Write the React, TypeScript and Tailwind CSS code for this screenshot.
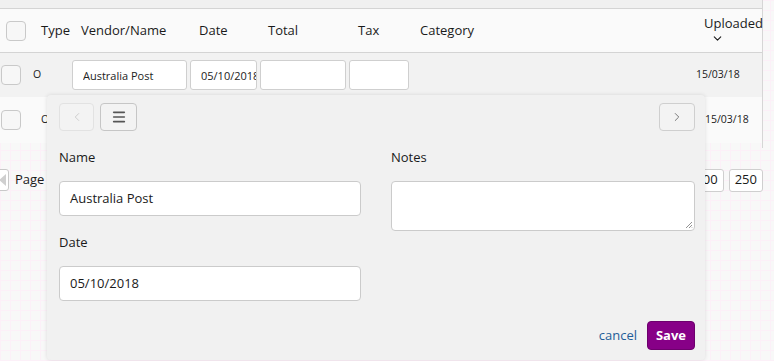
import { ChevronDown, ChevronLeft, ChevronRight, Menu } from "lucide-react";

const font = { fontFamily: '"Open Sans", "Liberation Sans", sans-serif' };

function Box({ className = "" }: { className?: string }) {
  return (
    <div
      className={`w-[20px] h-[20px] rounded-[4px] border border-[#c9c9c9] bg-[#f7f7f7] shrink-0 ${className}`}
    />
  );
}

function CellInput({ value = "", w }: { value?: string; w: string }) {
  return (
    <input
      readOnly
      value={value}
      className={`${w} h-[30px] shrink-0 mr-[3px] bg-white border border-[#cfcfcf] rounded-[3px] pl-[10px] pr-0 text-[11px] text-[#222] outline-none`}
    />
  );
}

export default function App() {
  return (
    <div
      style={font}
      className="relative w-[774px] h-[361px] overflow-hidden bg-[#f8f8f8] bg-[image:linear-gradient(to_right,#fcf0f8_1px,transparent_1px),linear-gradient(to_bottom,#fcf0f8_1px,transparent_1px)] bg-size-[10px_10px] text-[#1a1a1a]"
    >
      {/* table */}
      <div className="w-[763px] h-[148px] border-r border-[#d6d6d6] flex flex-col">
        <div className="h-[9px] bg-[#f0f0f0] border-b border-[#d4d4d4]" />
        <div className="h-[44px] bg-[#fafafa] border-b border-[#d4d4d4] flex items-center text-[13px]">
          <Box className="ml-[6px]" />
          <div className="w-[40px] ml-[15px]">Type</div>
          <div className="w-[118px]">Vendor/Name</div>
          <div className="w-[69px]">Date</div>
          <div className="w-[90px]">Total</div>
          <div className="w-[62px]">Tax</div>
          <div className="flex-1">Category</div>
          <div className="w-[58px] flex flex-col items-start leading-[16px] pb-[2px]">
            <span>Uploaded</span>
            <ChevronDown className="ml-[7px] mt-[1px]" size={13} strokeWidth={2} />
          </div>
        </div>
        <div className="h-[44px] bg-[#f2f2f2] flex items-center text-[10.5px]">
          <Box className="ml-[1px]" />
          <div className="w-[51px] pl-[12px]">O</div>
          <CellInput w="w-[115px]" value="Australia Post" />
          <CellInput w="w-[67px]" value="05/10/2018" />
          <CellInput w="w-[86px]" />
          <CellInput w="w-[60px]" />
          <div className="flex-1" />
          <div className="w-[66px]">15/03/18</div>
        </div>
        <div className="h-[46px] bg-[#fafafa] flex items-center text-[10.5px]">
          <Box className="ml-[1px]" />
          <div className="w-[39px] pl-[20px]">O</div>
          <div className="flex-1" />
          <div className="w-[57px]">15/03/18</div>
        </div>
      </div>

      {/* pagination */}
      <div className="h-[24px] mt-[20px] flex items-center text-[13px]">
        <div className="w-[22px] h-[22px] -ml-[13px] mr-[6px] border border-[#c9c9c9] rounded-[3px] bg-white flex items-center justify-end pr-[2px]">
          <div className="w-0 h-0 border-y-[6px] border-y-transparent border-r-[7px] border-r-[#cfcfcf]" />
        </div>
        <span>Page 1</span>
        <div className="flex-1" />
        <div className="h-[23px] px-[5px] bg-white border border-[#cfcfcf] rounded-[3px] flex items-center mr-[5px]">
          100
        </div>
        <div className="h-[23px] px-[5px] bg-white border border-[#cfcfcf] rounded-[3px] flex items-center mr-[11px]">
          250
        </div>
      </div>

      {/* edit popover */}
      <div className="absolute left-[47px] top-[95px] w-[658px] h-[265px] bg-[#f1f1f1] rounded-[4px] shadow-[0_0_4px_rgba(0,0,0,0.12)] pl-[12px] pr-[10px] pt-[8px] flex flex-col text-[13px]">
        <div className="flex items-center gap-[6px]">
          <div className="w-[35px] h-[28px] rounded-[4px] border border-[#e2e2e2] bg-[#f3f3f3] flex items-center justify-center text-[#c8c8c8]">
            <ChevronLeft size={14} strokeWidth={1.5} />
          </div>
          <div className="w-[37px] h-[28px] rounded-[4px] border border-[#c6c6c6] bg-[#f3f3f3] flex items-center justify-center text-[#555]">
            <Menu size={16} strokeWidth={2.4} />
          </div>
          <div className="flex-1" />
          <div className="w-[36px] h-[28px] rounded-[4px] border border-[#cfcfcf] bg-[#f3f3f3] flex items-center justify-center text-[#666]">
            <ChevronRight size={14} strokeWidth={1.5} />
          </div>
        </div>

        <div className="flex gap-[30px] mt-[17px]">
          <div className="w-[302px] flex flex-col">
            <div className="leading-[18px]">Name</div>
            <div className="mt-[15px] h-[35px] bg-white border border-[#cbcbcb] rounded-[4px] flex items-center px-[10px]">
              Australia Post
            </div>
            <div className="mt-[17px] leading-[18px]">Date</div>
            <div className="mt-[15px] h-[35px] bg-white border border-[#cbcbcb] rounded-[4px] flex items-center px-[10px]">
              05/10/2018
            </div>
          </div>
          <div className="w-[304px] flex flex-col">
            <div className="leading-[18px]">Notes</div>
            <div className="relative mt-[15px] h-[50px] bg-white border border-[#cbcbcb] rounded-[4px]">
              <svg className="absolute right-[1px] bottom-[1px]" width="8" height="8" viewBox="0 0 8 8">
                <path d="M7 1 L1 7 M7 4 L4 7 M7 6.5 L6.5 7" stroke="#777" strokeWidth="0.8" />
              </svg>
            </div>
          </div>
        </div>

        <div className="flex-1" />
        <div className="flex items-center justify-end gap-[10px] mb-[10px]">
          <span className="text-[#1f5d98]">cancel</span>
          <div className="w-[48px] h-[29px] rounded-[4px] bg-[#870087] border border-[#6d006d] text-white font-bold flex items-center justify-center">
            Save
          </div>
        </div>
      </div>
    </div>
  );
}
